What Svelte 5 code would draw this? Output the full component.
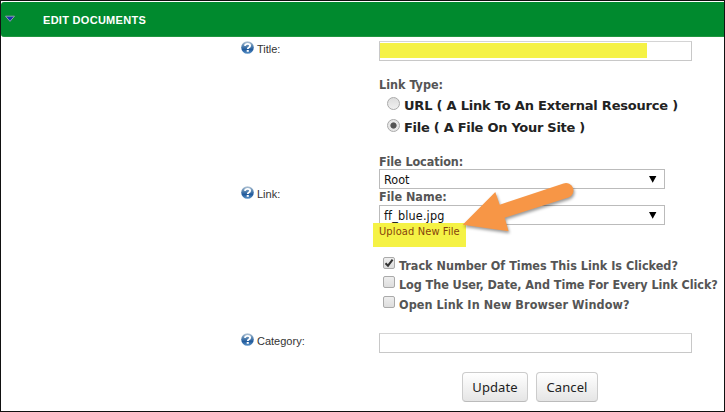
<script>
  const options = [
    { text: 'Track Number Of Times This Link Is Clicked?', checked: true, cls: 'track' },
    { text: 'Log The User, Date, And Time For Every Link Click?', checked: false, cls: 'log' },
    { text: 'Open Link In New Browser Window?', checked: false, cls: 'open' }
  ];
</script>

{#snippet label(text)}
  <div class="label">
    <svg class="help" width="13" height="13" viewBox="0 0 13 13">
      <defs>
        <linearGradient id="ball" x1="0" y1="0" x2="0" y2="1">
          <stop offset="0" stop-color="#b9c9d8" />
          <stop offset=".35" stop-color="#5f8ab4" />
          <stop offset=".65" stop-color="#205a9c" />
          <stop offset="1" stop-color="#5b93c8" />
        </linearGradient>
      </defs>
      <circle cx="6.5" cy="6.5" r="6.3" fill="url(#ball)" />
      <path d="M3.9 4.9Q4.3 2.9 6.6 2.9Q9.1 2.9 9.1 4.7Q9.1 5.8 7.8 6.5Q6.8 7.1 6.8 8" fill="none" stroke="#fff" stroke-width="1.9" />
      <rect x="5.7" y="9" width="2.1" height="1.8" fill="#fff" />
    </svg>
    <span>{text}</span>
  </div>
{/snippet}

<main class="page">
  <header>
    <svg class="toggle" width="12" height="8" viewBox="0 0 12 8">
      <path d="M1.5 1.2H10.5L6 6.4Z" fill="#1c35a5" stroke="#8b9dac" stroke-width="1" />
      <path d="M3.4 2H8.6L6 5Z" fill="#1636b0" />
    </svg>
    <h1>EDIT DOCUMENTS</h1>
  </header>

  <section class="row title-row">
    {@render label('Title:')}
    <div class="input"><div class="mark"></div></div>
  </section>

  <section class="row link-row">
    {@render label('Link:')}
    <div class="fields">
      <div class="caption type">Link Type:</div>
      <div class="choice"><i class="radio"></i><span class="url">URL ( A Link To An External Resource )</span></div>
      <div class="choice"><i class="radio on"></i><span class="file">File ( A File On Your Site )</span></div>
      <div class="caption location">File Location:</div>
      <div class="select"><span>Root</span><svg width="8" height="7" viewBox="0 0 8 7"><path d="M0 0H7.4L3.7 6.8Z" /></svg></div>
      <div class="caption name">File Name:</div>
      <div class="select"><span class="filename">ff_blue.jpg</span><svg width="8" height="7" viewBox="0 0 8 7"><path d="M0 0H7.4L3.7 6.8Z" /></svg></div>
      <div class="upload"><span>Upload New File</span></div>
      <div class="checks">
        {#each options as o}
          <div class="check">
            <i class="box">
              {#if o.checked}
                <svg width="10" height="10" viewBox="0 0 10 10"><path d="M1.5 5.2L4 7.7L8.6 1.7" fill="none" stroke="#333" stroke-width="2" /></svg>
              {/if}
            </i>
            <span class={o.cls}>{o.text}</span>
          </div>
        {/each}
      </div>
    </div>
  </section>

  <section class="row category-row">
    {@render label('Category:')}
    <div class="input"></div>
  </section>

  <footer>
    <button class="update">Update</button>
    <button class="cancel">Cancel</button>
  </footer>

  <svg class="arrow" width="125" height="65" viewBox="455 175 125 65">
    <path d="M462.7 224.7L495.3 192L499.7 204.7L563.5 183.4A7.4 7.4 0 0 1 568.5 197.5L504.7 217.7L508.6 231.3Z" fill="#f79646" />
  </svg>
</main>

<style>
  .page {
    position: relative;
    box-sizing: border-box;
    width: 725px;
    height: 412px;
    border: 1px solid #111;
    background: #fff;
    overflow: hidden;
    font-family: 'DejaVu Sans Condensed', 'DejaVu Sans', sans-serif;
    font-stretch: condensed;
    font-size: 12.5px;
    color: #555;
  }
  header {
    display: flex;
    align-items: center;
    box-sizing: border-box;
    height: 35px;
    margin-top: 1px;
    padding-left: 3px;
    background: #008a2e;
    border-bottom: 1px solid #20963f;
    border-radius: 3px 0 0 3px;
  }
  .toggle { margin-top: -1px; }
  h1 {
    margin: 2px 0 0 27px;
    font: bold 11px/16px 'Liberation Sans', Arial, sans-serif;
    letter-spacing: 0.29px;
    color: #fff;
    white-space: nowrap;
  }
  .row { display: flex; padding-left: 240px; }
  .label {
    display: flex;
    width: 138px;
    flex: none;
    font: 11px/14px 'Liberation Sans', Arial, sans-serif;
    color: #333;
  }
  .help { margin-right: 3px; flex: none; }
  .label span { padding-top: 1px; }
  .input {
    box-sizing: border-box;
    width: 313px;
    height: 20px;
    border: 1px solid #c8c8c8;
    border-top-color: #d4d4d4;
    padding-top: 1px;
  }
  .mark { width: 267px; height: 15px; background: #f5f245; }
  .title-row { height: 37px; padding-top: 4px; box-sizing: border-box; }
  .link-row { height: 259px; }
  .link-row .label { padding-top: 112px; }
  .fields { width: 345px; white-space: nowrap; }
  .caption { font-weight: bold; line-height: 16px; }
  .type { padding-top: 3px; height: 21px; box-sizing: border-box; }
  .choice { display: flex; height: 22px; padding-left: 8px; color: #222; font-weight: bold; line-height: 21px; }
  .choice span {
    padding-left: 4px;
    font-family: 'DejaVu Sans', sans-serif;
    font-stretch: normal;
    font-size: 13px;
  }
  .choice .url { letter-spacing: -0.21px; }
  .choice .file { letter-spacing: -0.28px; }
  .radio {
    box-sizing: border-box;
    width: 13px;
    height: 13px;
    margin-top: 2px;
    border: 1px solid #aaa;
    border-radius: 50%;
    background: linear-gradient(#ddd, #f0f0f0);
  }
  .radio.on { background: radial-gradient(circle, #555 0 2.7px, #e8e8e8 3.5px); }
  .location { padding-top: 15px; height: 30px; box-sizing: border-box; letter-spacing: -0.1px; }
  .select {
    display: flex;
    align-items: center;
    justify-content: space-between;
    box-sizing: border-box;
    width: 286px;
    height: 20px;
    border: 1px solid #bbb;
    padding: 0 7px 0 4px;
    color: #111;
  }
  .filename { letter-spacing: 0.15px; }
  .name { height: 16px; }
  .upload {
    box-sizing: border-box;
    width: 93px;
    height: 24px;
    margin: -2px 0 0 -6px;
    padding-left: 6px;
    background: #f5f245;
    color: #86430c;
    font-size: 11px;
    letter-spacing: 0.12px;
    line-height: 18px;
  }
  .checks { padding: 9px 0 0 4px; }
  .check { display: flex; height: 19.3px; font-weight: bold; line-height: 20px; }
  .check span { padding-left: 4px; }
  .log { letter-spacing: -0.06px; }
  .open { letter-spacing: 0.08px; }
  .box {
    box-sizing: border-box;
    width: 12px;
    height: 12px;
    border: 1px solid #aaa;
    border-radius: 2px;
    background: linear-gradient(#eee, #ddd);
    margin-top: 1px;
  }
  .box svg { display: block; }
  footer { display: flex; gap: 8px; padding: 19px 0 0 461px; }
  button {
    box-sizing: border-box;
    height: 30px;
    padding: 0;
    border: 1px solid #ccc;
    border-bottom-color: #bbb;
    border-radius: 4px;
    background: linear-gradient(#fff, #e5e5e5);
    font: 13px 'Noto Sans', sans-serif;
    letter-spacing: 0.1px;
    color: #222;
  }
  .update { width: 66px; }
  .cancel { width: 62px; }
  .arrow {
    position: absolute;
    left: 454px;
    top: 174px;
    filter: drop-shadow(1px 2px 1.5px rgba(0, 0, 0, .4));
  }
</style>
